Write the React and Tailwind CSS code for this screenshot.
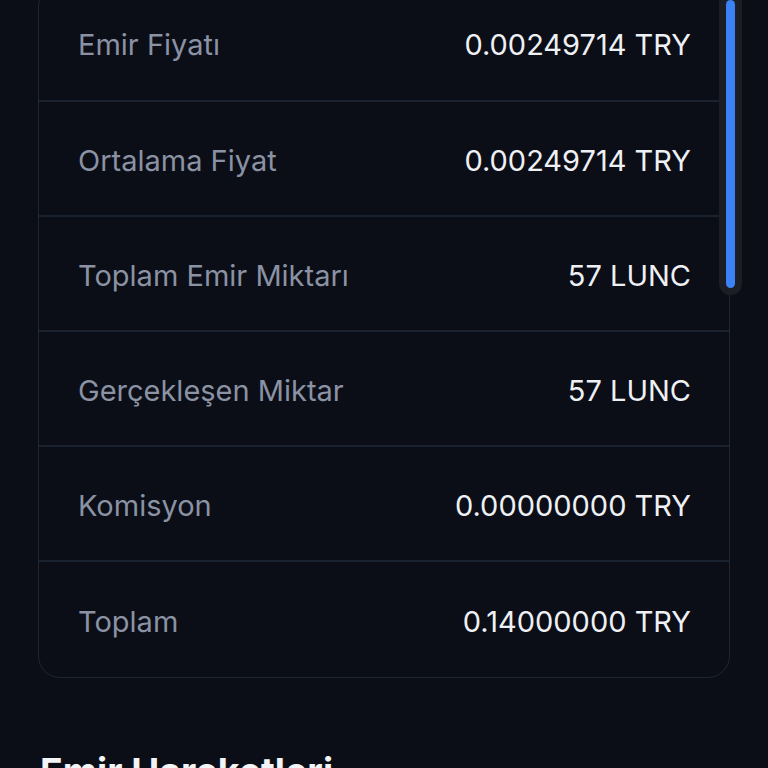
import React from "react";

const rows = [
  ["Emir Fiyatı", "0.00249714 TRY"],
  ["Ortalama Fiyat", "0.00249714 TRY"],
  ["Toplam Emir Miktarı", "57 LUNC"],
  ["Gerçekleşen Miktar", "57 LUNC"],
  ["Komisyon", "0.00000000 TRY"],
  ["Toplam", "0.14000000 TRY"],
];

export default function App() {
  return (
    <div
      className="relative w-[768px] h-[768px] overflow-hidden bg-[#0b0e17]"
      style={{ fontFamily: "Inter, 'Noto Sans', sans-serif" }}
    >
      <div className="-mt-[15px] px-[38px]">
        <div className="rounded-[22px] border border-[#1f2531]">
          {rows.map(([label, value], i) => (
            <div
              key={label}
              className={
                "flex items-center justify-between pl-[39px] pr-[38px] " +
                (i === 0 ? "h-[116px] pt-[2px] " : "h-[115px] pt-[4px] ") +
                (i < rows.length - 1 ? "border-b-2 border-[#1a2230]" : "")
              }
            >
              <span className="text-[29px] leading-none text-[#8a92a3]">{label}</span>
              <span className="text-[29px] leading-none text-[#eef0f4]">{value}</span>
            </div>
          ))}
        </div>
        <h2 className="mt-[75px] text-[37.5px] leading-none font-bold text-[#f3f4f6] pl-[2px] whitespace-nowrap">
          Emir Hareketleri
        </h2>
      </div>
      <div className="absolute right-[26px] top-[-10px] h-[305px] w-[23px] rounded-b-full bg-[#1b1e25] flex justify-center pt-[10px] pb-[7px]">
        <div className="w-[9px] h-full rounded-full bg-[#3b82f6]" />
      </div>
    </div>
  );
}
